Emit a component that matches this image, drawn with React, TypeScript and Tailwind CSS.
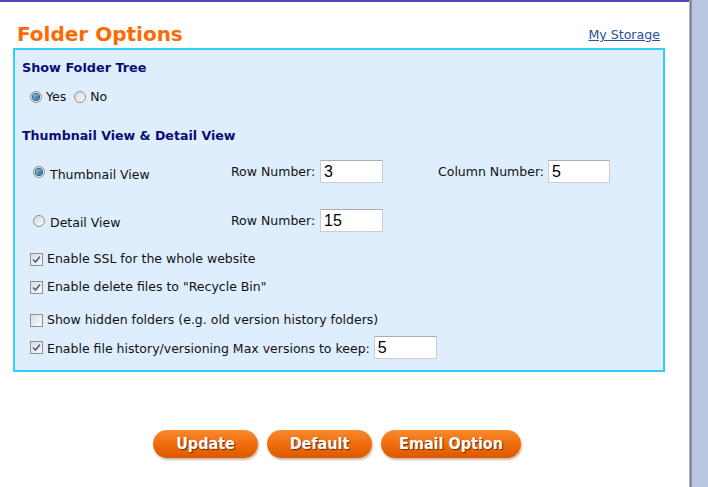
import React from 'react';

const font = "font-['DejaVu_Sans',Verdana,sans-serif]";

function Radio({ checked }: { checked?: boolean }) {
  return (
    <span className="relative inline-flex h-[12px] w-[12px] shrink-0 items-center justify-center rounded-full border border-[#8e8f8f] bg-gradient-to-br from-[#d8d8d8] to-[#fdfdfd]">
      {checked && (
        <span className="h-[6px] w-[6px] rounded-full bg-gradient-to-br from-[#7fd2f7] to-[#1b5f88] ring-1 ring-[#2a5d7d]" />
      )}
    </span>
  );
}

function Check({ checked }: { checked?: boolean }) {
  return (
    <span className="inline-flex h-[13px] w-[13px] shrink-0 items-center justify-center border border-[#8f8f8f] bg-gradient-to-br from-[#dcdcdc] to-[#fbfbfb]">
      {checked && (
        <svg width="9" height="9" viewBox="0 0 9 9">
          <path d="M1 4.5 L3.5 7 L8 1.5" fill="none" stroke="#4a5f97" strokeWidth="1.6" />
        </svg>
      )}
    </span>
  );
}

function Field({ value, w }: { value: string; w: string }) {
  return (
    <div
      className={`flex h-[23px] ${w} shrink-0 items-center border border-[#c9ced6] border-t-[#a9adb5] bg-white pl-[3px] font-['Liberation_Sans',Arial,sans-serif] text-[16px] text-black`}
    >
      {value}
    </div>
  );
}

function OrangeButton({ label, w }: { label: string; w: string }) {
  return (
    <button
      className={`flex h-[28px] ${w} items-center justify-center rounded-full bg-gradient-to-b from-[#f98a2a] via-[#ef6d0c] to-[#dc5a00] font-['DejaVu_Sans_Condensed','DejaVu_Sans',sans-serif] text-[16px] font-bold text-white shadow-[1px_2px_2px_rgba(120,60,0,0.35)] [text-shadow:1px_1px_1px_#6b2c00]`}
    >
      {label}
    </button>
  );
}

export default function App() {
  return (
    <div className={`flex h-[487px] w-[708px] overflow-hidden bg-white ${font}`}>
      <div className="flex w-[689px] flex-col">
        <div className="h-[2px] w-full bg-[#5b3fbf]" />

        <div className="flex items-end justify-between pl-[17px] pr-[29px] pt-[20px]">
          <h1 className="text-[20px] font-bold leading-[24px] text-[#ff6a00]">Folder Options</h1>
          <a className="mb-[3px] text-[12.6px] leading-[16px] text-[#2a4f9c] underline">My Storage</a>
        </div>

        <div className="ml-[13px] mt-[2px] h-[324px] w-[652px] whitespace-nowrap border-2 border-[#33ccff] bg-[#dfeefd] pl-[7px] pt-[10px] text-[12.5px] leading-[16px] text-[#111]">
          <h2 className="text-[12.8px] font-bold leading-[16px] text-[#0a0a78]">Show Folder Tree</h2>
          <div className="mt-[13px] flex items-center gap-[4px] pl-[8px]">
            <Radio checked />
            <span className="mr-[4px]">Yes</span>
            <Radio />
            <span>No</span>
          </div>

          <h2 className="mt-[23px] text-[12.6px] font-bold leading-[16px] text-[#0a0a78]">
            Thumbnail View &amp; Detail View
          </h2>

          <div className="mt-[16px] flex items-center pl-[11px]">
            <div className="flex w-[198px] items-center gap-[5px]">
              <Radio checked />
              <span className="mt-[6px]">Thumbnail View</span>
            </div>
            <span className="w-[89px]">Row Number:</span>
            <Field value="3" w="w-[63px]" />
            <span className="ml-[55px] w-[110px]">Column Number:</span>
            <Field value="5" w="w-[62px]" />
          </div>

          <div className="mt-[26px] flex items-center pl-[11px]">
            <div className="flex w-[198px] items-center gap-[5px]">
              <Radio />
              <span className="mt-[4px]">Detail View</span>
            </div>
            <span className="w-[89px]">Row Number:</span>
            <Field value="15" w="w-[63px]" />
          </div>

          <div className="mt-[19px] flex items-center gap-[4px] pl-[8px]">
            <Check checked />
            <span>Enable SSL for the whole website</span>
          </div>
          <div className="mt-[12px] flex items-center gap-[4px] pl-[8px]">
            <Check checked />
            <span>Enable delete files to "Recycle Bin"</span>
          </div>
          <div className="mt-[17px] flex items-center gap-[4px] pl-[8px]">
            <Check />
            <span>Show hidden folders (e.g. old version history folders)</span>
          </div>
          <div className="mt-[8px] flex items-center gap-[4px] pl-[8px]">
            <Check checked />
            <span className="mt-[2px]">Enable file history/versioning Max versions to keep:</span>
            <Field value="5" w="w-[63px]" />
          </div>
        </div>

        <div className="mt-[58px] flex gap-[9px] pl-[153px]">
          <OrangeButton label="Update" w="w-[105px]" />
          <OrangeButton label="Default" w="w-[105px]" />
          <OrangeButton label="Email Option" w="w-[140px]" />
        </div>
      </div>
      <div className="w-[3px] bg-gradient-to-r from-[#c8ccd4] via-[#7a7e88] to-[#9aa0ac]" />
      <div className="flex-1 bg-[#b8c8e2]" />
    </div>
  );
}
